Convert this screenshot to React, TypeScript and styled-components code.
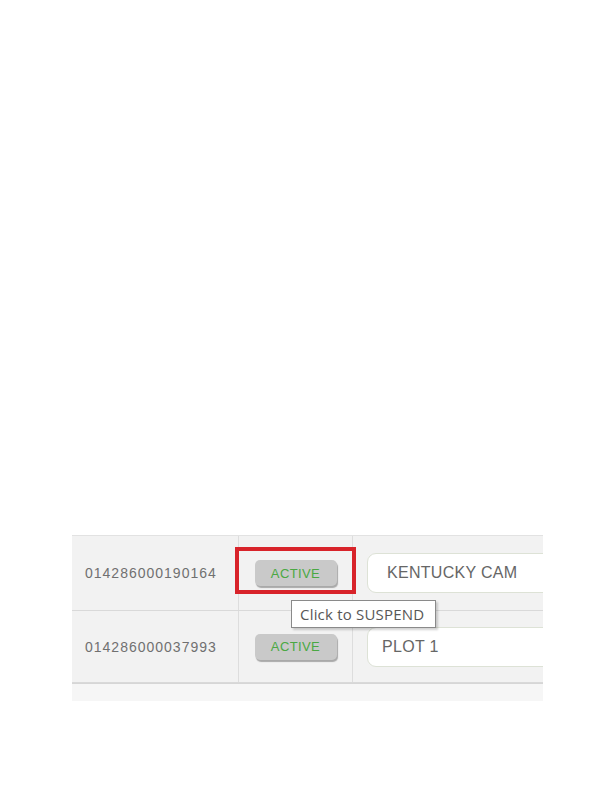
import React from "react";
import styled, { createGlobalStyle } from "styled-components";

const GlobalStyle = createGlobalStyle`
  html, body {
    margin: 0;
    padding: 0;
    background: #ffffff;
    font-family: "Liberation Sans", Arial, sans-serif;
  }
`;

const Page = styled.div`
  width: 613px;
  height: 793px;
  padding: 535px 0 0 72px;
  box-sizing: border-box;
`;

const Table = styled.div`
  width: 471px;
  overflow: hidden;
  background: #f2f2f2;
  border-top: 1px solid #e2e2e2;
`;

const Row = styled.div<{ $height: number }>`
  display: grid;
  grid-template-columns: 167px 114px 1fr;
  height: ${(p) => p.$height}px;
  border-bottom: 1px solid #d9d9d9;
`;

const Cell = styled.div<{ $divider?: boolean; $pad?: number }>`
  position: relative;
  display: flex;
  align-items: center;
  padding-left: ${(p) => p.$pad ?? 0}px;
  border-right: ${(p) => (p.$divider ? "1px solid #dddddd" : "none")};
  box-sizing: border-box;
`;

const ButtonCell = styled(Cell)`
  justify-content: center;
`;

const SerialText = styled.span`
  font-size: 14px;
  letter-spacing: 1px;
  color: #707070;
`;

const StatusButton = styled.button`
  width: 82px;
  height: 26px;
  padding: 0;
  border: none;
  border-radius: 5px;
  background: #c9c9c9;
  box-shadow: 1px 2px 1px #a9a9a9;
  color: #4aa843;
  font-family: "Liberation Sans", Arial, sans-serif;
  font-size: 13px;
  letter-spacing: 0.4px;
  cursor: pointer;
`;

const Highlight = styled.div`
  position: absolute;
  left: -4px;
  top: 11px;
  width: 121px;
  height: 47px;
  border: 4px solid #d8232a;
  box-sizing: border-box;
  pointer-events: none;
`;

const Tooltip = styled.div`
  position: absolute;
  left: 52px;
  top: 64px;
  z-index: 2;
  width: 145px;
  height: 28px;
  display: flex;
  align-items: center;
  padding-left: 8px;
  box-sizing: border-box;
  background: #ffffff;
  border: 1px solid #8a8a8a;
  box-shadow: 2px 2px 2px rgba(0, 0, 0, 0.18);
  font-family: "Open Sans", "Noto Sans", sans-serif;
  font-size: 15px;
  letter-spacing: 0.2px;
  color: #575757;
  white-space: nowrap;
`;

const NameInput = styled.input<{ $indent: number }>`
  width: 240px;
  height: 40px;
  flex: none;
  padding: 0 0 0 ${(p) => p.$indent}px;
  box-sizing: border-box;
  border: 1px solid #dde2d6;
  border-radius: 9px;
  background: #ffffff;
  font-family: "Liberation Sans", Arial, sans-serif;
  font-size: 16px;
  letter-spacing: 0.3px;
  color: #666666;
  outline: none;
`;

const Footer = styled.div`
  height: 17px;
  background: #f6f6f6;
  border-top: 1px solid #d6d6d6;
`;

type Device = { serial: string; name: string; indent: number; height: number };

const devices: Device[] = [
  { serial: "014286000190164", name: "KENTUCKY CAM", indent: 19, height: 74 },
  { serial: "014286000037993", name: "PLOT 1", indent: 14, height: 71 },
];

export default function App() {
  return (
    <>
      <GlobalStyle />
      <Page>
        <Table>
          {devices.map((d, i) => (
            <Row key={d.serial} $height={d.height}>
              <Cell $divider $pad={13}>
                <SerialText>{d.serial}</SerialText>
              </Cell>
              <ButtonCell $divider>
                <StatusButton>ACTIVE</StatusButton>
                {i === 0 && (
                  <>
                    <Highlight />
                    <Tooltip>Click to SUSPEND</Tooltip>
                  </>
                )}
              </ButtonCell>
              <Cell $pad={14}>
                <NameInput $indent={d.indent} defaultValue={d.name} />
              </Cell>
            </Row>
          ))}
          <Footer />
        </Table>
      </Page>
    </>
  );
}
